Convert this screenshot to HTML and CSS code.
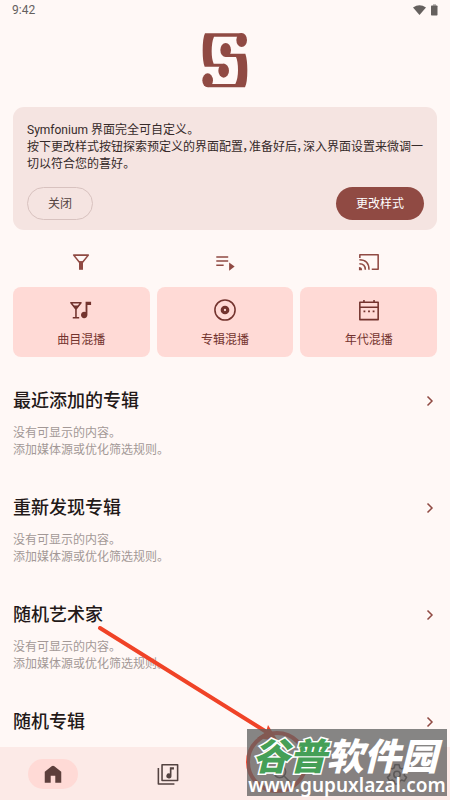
FILE: index.html
```html
<!DOCTYPE html>
<html lang="zh-CN">
<head>
<meta charset="utf-8">
<meta name="viewport" content="width=device-width, initial-scale=1">
<title>Symfonium</title>
<link rel="stylesheet" href="styles.css">
</head>
<body>
<header class="status">
  <span>9:42</span>
  <span class="status-icons">
    <svg width="13" height="10" viewBox="0 0 13 10"><path d="M0 2.500Q6.500-2 13 2.500L6.500 10Z"/></svg>
    <svg width="7" height="12" viewBox="0 0 7 12"><path d="M2 0h3v2H2z" opacity=".4"/><rect y="1.500" width="6.500" height="10" rx=".7"/></svg>
  </span>
</header>
<main class="content">
  <svg class="logo" viewBox="37 23 138 165" role="img" aria-label="Symfonium">
    <path d="M46 24H157V34H73Q66 50 66 78 66 102 72 115H105V124H45Q39 110 39 76 39 38 46 24Z"/>
    <path d="M108 85H167Q173 102 173 135 173 172 166 186H55V176H137Q145 160 145 135 145 107 139 95H108Z"/>
    <ellipse cx="156" cy="44" rx="16" ry="21"/><ellipse cx="108" cy="74" rx="16" ry="21"/>
    <ellipse cx="102" cy="136" rx="16" ry="21"/><ellipse cx="54" cy="165" rx="16" ry="21"/>
  </svg>
  <section class="card">
    <p>Symfonium 界面完全可自定义。<br>按下更改样式按钮探索预定义的界面配置，准备好后，深入界面设置来微调一切以符合您的喜好。</p>
    <div class="actions">
      <button class="pill outline">关闭</button>
      <button class="pill filled">更改样式</button>
    </div>
  </section>
  <div class="tools">
    <button aria-label="筛选"><svg class="icon" viewBox="0 0 24 24"><path class="line" d="M4 4.500h16l-6.500 8h-3z"/><path d="M9.800 11h4.400v9.500H9.800z"/></svg></button>
    <button aria-label="播放队列"><svg class="icon" viewBox="0 0 24 24"><path class="line" d="M2.500 6.500h13M2.500 11h13M2.500 15.500h8"/><path d="M16.500 12.500v9l6-4.500z"/></svg></button>
    <button aria-label="投屏"><svg class="icon" viewBox="0 0 24 24"><path class="line" d="M2 7.500V4h20v16h-7M1.500 9.500Q12 9.500 12 20.500M1.500 14Q8 14 8 20.500"/><path d="M1 17.500Q4.500 17.500 4.500 21H1z"/></svg></button>
  </div>
  <div class="tiles">
    <button class="tile"><svg class="icon wide" viewBox="0 0 24 24"><path class="line" d="M1 4h11L6.500 11zM6.500 10v10M3 20.500h7"/><path d="M2.800 7h7.500L6.500 12zM17 3h6v3.500h-4v11a3.500 3.500 0 1 1-2-3.200z"/></svg><span>曲目混播</span></button>
    <button class="tile"><svg class="icon" viewBox="0 0 24 24"><circle class="line" cx="12" cy="12" r="11"/><circle cx="12" cy="12" r="3" fill="none" stroke="currentColor" stroke-width="3.500"/></svg><span>专辑混播</span></button>
    <button class="tile"><svg class="icon" viewBox="0 0 24 24"><path class="line" d="M2 3.500h20v19H2zM2 9h20M6.500 1v2M17.500 1v2"/><path d="M6 12.500h2v2H6zM11 12.500h2v2h-2zM16 12.500h2v2h-2z"/></svg><span>年代混播</span></button>
  </div>
  <section class="shelf">
    <a class="shelf-link" href="#"><h2>最近添加的专辑</h2><svg class="chevron" viewBox="0 0 12 12"><path d="M3.500 1.500L8 6l-4.500 4.500"/></svg></a>
    <p>没有可显示的内容。<br>添加媒体源或优化筛选规则。</p>
  </section>
  <section class="shelf">
    <a class="shelf-link" href="#"><h2>重新发现专辑</h2><svg class="chevron" viewBox="0 0 12 12"><path d="M3.500 1.500L8 6l-4.500 4.500"/></svg></a>
    <p>没有可显示的内容。<br>添加媒体源或优化筛选规则。</p>
  </section>
  <section class="shelf">
    <a class="shelf-link" href="#"><h2>随机艺术家</h2><svg class="chevron" viewBox="0 0 12 12"><path d="M3.500 1.500L8 6l-4.500 4.500"/></svg></a>
    <p>没有可显示的内容。<br>添加媒体源或优化筛选规则。</p>
  </section>
  <section class="shelf">
    <a class="shelf-link" href="#"><h2>随机专辑</h2><svg class="chevron" viewBox="0 0 12 12"><path d="M3.500 1.500L8 6l-4.500 4.500"/></svg></a>
  </section>
</main>
<nav class="nav">
  <a class="active" href="#" aria-label="主页"><svg class="icon" viewBox="0 0 24 24"><path d="M3 9.500L10.500 3.500Q12 2.300 13.500 3.500L21 9.500V21.500h-6.500V14h-5v7.500H3z"/></svg></a>
  <a href="#" aria-label="媒体库"><svg class="icon" viewBox="0 0 24 24"><path class="line" d="M5.500 2h17v17h-17zM1.500 5.500V23H19"/><path d="M14 4.500h4.500v2.700h-2.700v6.800a2.800 2.800 0 1 1-1.800-2.500z"/></svg></a>
  <a href="#" aria-label="搜索"><svg class="icon" viewBox="0 0 24 24"><path class="line" d="M14.500 14.500L21 21"/><circle class="line" cx="9.500" cy="9.500" r="6.500"/></svg></a>
  <a href="#" aria-label="设置"><svg class="icon" viewBox="0 0 24 24"><path class="line" d="M9.700 2h4.600l.7 3.200 2 1.200 3.100-1 2.300 4-2.400 2.100v2l2.400 2.100-2.300 4-3.100-1-2 1.200-.7 3.200H9.700L9 19.800l-2-1.200-3.100 1-2.300-4L4 13.500v-2L1.600 9.400l2.300-4 3.100 1 2-1.200z"/><circle class="line" cx="12" cy="12.500" r="3.500"/></svg></a>
</nav>
<svg class="pointer" width="220" height="174" viewBox="0 0 220 174" aria-hidden="true">
  <circle cx="180" cy="136" r="29" fill="none" stroke="#ef4a36" stroke-width="4"/>
  <path d="M3 2L168 105" fill="none" stroke="#f04327" stroke-width="4" stroke-linecap="round"/>
  <path d="M181 115L160 112L169 106L171 99Z" fill="#f04327"/>
</svg>
<aside class="watermark">
  <div class="brand"><span>谷普</span>软件园</div>
  <div class="site">www.gupuxlazal.com</div>
</aside>
</body>
</html>
```
FILE: styles.css
```css
* { box-sizing: border-box; }

body {
  position: relative;
  display: flex;
  flex-direction: column;
  min-height: 100vh;
  margin: 0;
  overflow-x: hidden;
  background: #fff8f6;
  color: #362a29;
  font: 12px/17px Roboto, "Noto Sans CJK SC", sans-serif;
}

h2, p { margin: 0; }
a { color: inherit; text-decoration: none; }
button {
  padding: 0;
  border: 0;
  background: none;
  color: inherit;
  font: inherit;
  cursor: pointer;
}
svg { display: block; fill: currentColor; }

.icon { width: 22px; height: 22px; }
.icon.wide { width: 24px; }
.line {
  fill: none;
  stroke: currentColor;
  stroke-width: 1.7;
  stroke-linejoin: round;
}

.status {
  display: flex;
  align-items: center;
  justify-content: space-between;
  height: 20px;
  padding: 0 12px;
  color: #65605e;
}
.status-icons { display: flex; align-items: center; gap: 5px; }

.content { flex: 1; padding: 13px 13px 0; }
.logo { width: 46px; height: 55px; margin: 0 auto 19px; color: #904a43; }

.card {
  padding: 15px 13px 10px 14px;
  border-radius: 11px;
  background: #f5e4e1;
}
.card p { font-feature-settings: "palt"; }
.actions { display: flex; justify-content: space-between; margin-top: 14px; }
.pill { height: 33px; padding: 2px 20px 0; border-radius: 17px; }
.outline { border: 1px solid #d8c2bf; color: #534341; }
.filled { background: #904a43; color: #fff; }

.tools, .tiles {
  display: grid;
  grid-template-columns: repeat(3, 1fr);
  gap: 7px;
}
.tools { margin: 21px 0 14px; color: #904a43; }
.tools button { display: grid; place-items: center; }

.tile {
  display: flex;
  flex-direction: column;
  align-items: center;
  gap: 11px;
  padding: 12px 0 8px;
  border-radius: 8px;
  background: #ffdad6;
  color: #73332e;
}

.shelf { margin-top: 31px; }
.shelf + .shelf { margin-top: 36px; }
.shelf-link {
  display: flex;
  align-items: center;
  justify-content: space-between;
  color: #231918;
}
.shelf h2 { font-size: 18px; line-height: 26px; font-weight: 500; }
.shelf p { margin-top: 11px; color: #a39896; }
.chevron {
  width: 12px;
  height: 12px;
  margin-right: 1px;
  fill: none;
  stroke: #904a43;
  stroke-width: 1.5;
}

.nav {
  display: flex;
  align-items: center;
  justify-content: space-between;
  height: 53px;
  padding: 0 28px;
  background: #fceae7;
  color: #534341;
}
.nav a {
  display: grid;
  place-items: center;
  width: 50px;
  height: 30px;
  border-radius: 15px;
}
.nav .active { background: #ffdad6; color: #5d3f3c; }

.pointer { position: absolute; right: 133px; bottom: 0; }

.watermark {
  position: absolute;
  right: 3px;
  bottom: 4px;
  width: 200px;
  height: 67px;
  padding-top: 3px;
  background: rgba(96, 96, 96, 0.76);
  color: #fff;
  text-align: center;
  white-space: nowrap;
}
.brand {
  padding-right: 4px;
  font: italic 900 37px/44px "Noto Sans CJK SC", sans-serif;
}
.brand span {
  color: #459f57;
  -webkit-text-stroke: 3px #fff;
  paint-order: stroke fill;
}
.site { font: 600 19px/18px "Noto Sans", sans-serif; }
```
